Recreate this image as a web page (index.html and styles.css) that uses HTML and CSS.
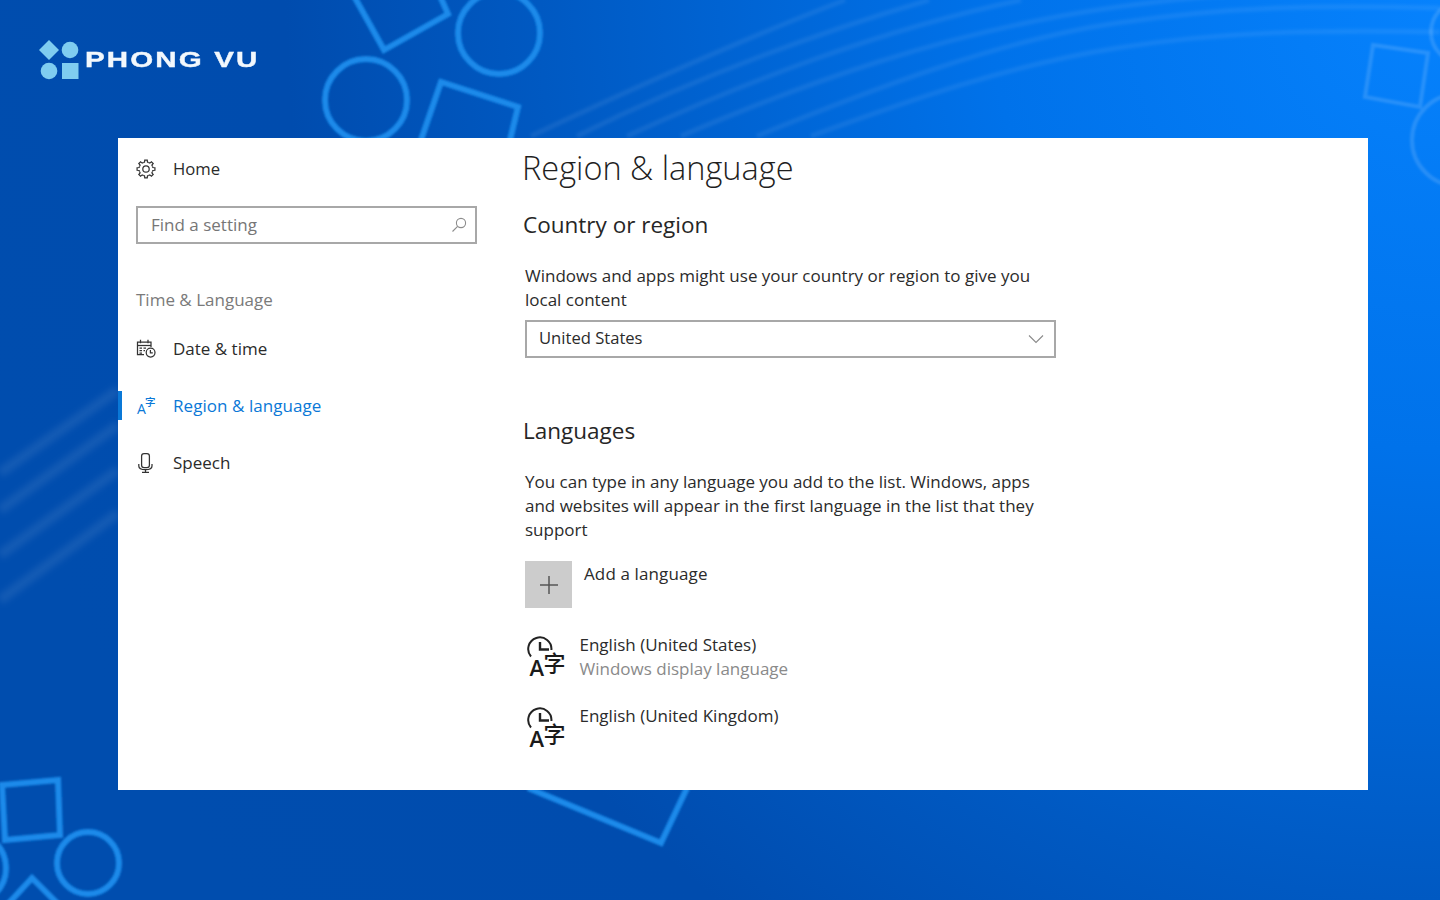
FILE: index.html
```html
<!DOCTYPE html>
<html lang="en">
<head>
<meta charset="utf-8">
<title>Region &amp; language</title>
<link rel="stylesheet" href="styles.css">
</head>
<body>
<svg class="backdrop" viewBox="0 0 1440 900" aria-hidden="true">
  <defs>
    <radialGradient id="bg" gradientUnits="userSpaceOnUse" cx="1440" cy="0" r="1500">
      <stop offset="0" stop-color="#0682fd"/>
      <stop offset=".3" stop-color="#0072ea"/>
      <stop offset=".6" stop-color="#0059c2"/>
      <stop offset=".77" stop-color="#004cae"/>
      <stop offset="1" stop-color="#004dae"/>
    </radialGradient>
    <filter id="soft" x="-20%" y="-20%" width="140%" height="140%"><feGaussianBlur stdDeviation="1.1"/></filter>
    <filter id="softer" x="-20%" y="-50%" width="140%" height="200%"><feGaussianBlur stdDeviation="1.6"/></filter>
    <filter id="band" x="-20%" y="-50%" width="140%" height="200%"><feGaussianBlur stdDeviation="3"/></filter>
  </defs>
  <rect width="1440" height="900" fill="url(#bg)"/>
  <g fill="none" stroke="#fff" stroke-opacity=".08" stroke-width="10" filter="url(#band)">
    <path d="M0 473 L118 390"/><path d="M0 510 L118 425"/><path d="M0 555 L118 470"/><path d="M0 600 L118 513"/>
  </g>
  <g fill="none" stroke="#fff" stroke-opacity=".07" stroke-width="5" filter="url(#softer)">
    <path d="M531 136 C640 85 740 40 845 0"/>
    <path d="M577 136 C690 80 810 35 929 0"/>
    <path d="M627 136 C750 80 880 30 1021 0"/>
    <path d="M681 136 C800 85 950 30 1117 7 S1320 -5 1440 -5"/>
    <path d="M757 136 C870 90 1000 40 1117 23 S1320 5 1440 8"/>
    <path d="M811 136 C910 100 1010 65 1117 48 S1320 30 1440 32"/>
  </g>
  <g fill="none" stroke="#1a8aea" stroke-width="6" filter="url(#soft)">
    <path d="M354 -4 L384 50 L448 14 L440 -4"/>
    <circle cx="499" cy="33" r="41"/>
    <circle cx="366" cy="100" r="41"/>
    <path d="M421 140 L441 82 L518 107 L510 140"/>
    <path d="M2 785 L58 780 L60 835 L5 840 Z"/>
    <ellipse cx="88" cy="863" rx="31" ry="31"/>
    <circle cx="-30" cy="868" r="36"/>
    <path d="M8 904 L32 878 L58 904"/>
    <path d="M528 788 L661 843 L687 788"/>
  </g>
  <g fill="none" stroke="#fff" stroke-opacity=".14" stroke-width="4" filter="url(#soft)">
    <path d="M1373 45 L1428 53 L1420 107 L1365 97 Z"/>
    <circle cx="1462" cy="32" r="31"/>
    <circle cx="1458" cy="140" r="46"/>
  </g>
</svg>

<header class="brand">
  <svg class="brand-mark" viewBox="0 0 40 40" aria-hidden="true">
    <path d="M10 0 L20 10 L10 20 L0 10 Z"/>
    <circle cx="31" cy="10" r="8.3"/>
    <circle cx="10" cy="31" r="8.3"/>
    <rect x="23" y="23" width="16.5" height="16"/>
  </svg>
  <span class="brand-name">PHONG VU</span>
</header>

<main class="window">
  <nav class="sidebar">
    <a class="nav-item home">
      <svg class="nav-icon" viewBox="0 0 20 20" aria-hidden="true">
        <g class="line">
          <g id="tooth"><path d="M7.32 3.53 8.54 3.15 8.75 1.09H11.25L11.46 3.15 12.68 3.53"/></g>
          <use href="#tooth" transform="rotate(45 10 10)"/>
          <use href="#tooth" transform="rotate(90 10 10)"/>
          <use href="#tooth" transform="rotate(135 10 10)"/>
          <use href="#tooth" transform="rotate(180 10 10)"/>
          <use href="#tooth" transform="rotate(225 10 10)"/>
          <use href="#tooth" transform="rotate(270 10 10)"/>
          <use href="#tooth" transform="rotate(315 10 10)"/>
          <circle cx="10" cy="10" r="3.2"/>
        </g>
      </svg>
      <span>Home</span>
    </a>
    <div class="search">
      <span>Find a setting</span>
      <svg class="search-icon" viewBox="0 0 16 16" aria-hidden="true"><circle cx="10" cy="6" r="4.6"/><path d="M6.6 9.4 1.5 14.5"/></svg>
    </div>
    <div class="nav-group">Time &amp; Language</div>
    <a class="nav-item">
      <svg class="nav-icon" viewBox="0 0 20 20" aria-hidden="true">
        <g class="line">
          <path d="M8 15.5H1.5V3H15V8"/><path d="M1.5 6.5H15"/><path d="M4.5 .8V4.2M12 .8V4.2"/>
          <path d="M3.5 9H6M7.5 9H10M3.5 11.5H6M7.5 11.5H9M3.5 14H6"/>
          <circle cx="14.6" cy="13.6" r="4.4"/><path d="M14.4 11V13.9H16.8"/>
        </g>
      </svg>
      <span>Date &amp; time</span>
    </a>
    <a class="nav-item active">
      <svg class="nav-icon tall" viewBox="0 -6 20 32" aria-hidden="true">
        <text class="glyph-a" x="1" y="18">A</text>
        <text class="glyph-zi" x="9" y="9.5">字</text>
      </svg>
      <span>Region &amp; language</span>
    </a>
    <a class="nav-item">
      <svg class="nav-icon" viewBox="0 0 20 20" aria-hidden="true">
        <g class="line">
          <rect x="5.6" y=".7" width="7.8" height="14" rx="2.4"/>
          <path d="M2.8 11V13C2.8 15.5 5 16.7 9.5 16.7S16 15.5 16 13V11"/>
          <path d="M9.5 16.7V19M6 19.3H13"/>
        </g>
      </svg>
      <span>Speech</span>
    </a>
  </nav>

  <section class="content">
    <h1>Region &amp; language</h1>
    <h2 class="country-title">Country or region</h2>
    <p class="copy country-copy">Windows and apps might use your country or region to give you<br>local content</p>
    <div class="select">
      <span>United States</span>
      <svg class="chevron" viewBox="0 0 16 10" aria-hidden="true"><path d="M1 1.5 8 8.5 15 1.5"/></svg>
    </div>
    <h2 class="languages-title">Languages</h2>
    <p class="copy languages-copy">You can type in any language you add to the list. Windows, apps<br>and websites will appear in the first language in the list that they<br>support</p>
    <div class="add-language">
      <div class="add-tile"><svg viewBox="0 0 20 20" aria-hidden="true"><path d="M10 1V19M1 10H19"/></svg></div>
      <span>Add a language</span>
    </div>
    <div class="language first">
      <svg class="language-icon" viewBox="0 0 44 46" aria-hidden="true">
        <path class="clock" d="M6 20.5A11.6 11.6 0 1 1 26.4 14"/>
        <path class="clock-hand" d="M15 6V13.5H24"/>
        <text class="big-a" x="4.5" y="40">A</text>
        <text class="big-zi" x="18.5" y="35">字</text>
      </svg>
      <div class="language-text">
        <div>English (United States)</div>
        <div class="muted">Windows display language</div>
      </div>
    </div>
    <div class="language second">
      <svg class="language-icon" viewBox="0 0 44 46" aria-hidden="true">
        <path class="clock" d="M6 20.5A11.6 11.6 0 1 1 26.4 14"/>
        <path class="clock-hand" d="M15 6V13.5H24"/>
        <text class="big-a" x="4.5" y="40">A</text>
        <text class="big-zi" x="18.5" y="35">字</text>
      </svg>
      <div class="language-text">
        <div>English (United Kingdom)</div>
      </div>
    </div>
  </section>
</main>
</body>
</html>
```

FILE: styles.css
```css
* { box-sizing: border-box; }
html, body { margin: 0; height: 100%; }
body {
  position: relative;
  width: 1440px;
  height: 900px;
  overflow: hidden;
  font-family: "Open Sans", "Noto Sans CJK SC", sans-serif;
  font-size: 17px;
  line-height: 24px;
  color: #2b2b2b;
  background: #0052b9;
  padding: 40px 72px 0 118px;
}
.backdrop { position: absolute; inset: 0; width: 1440px; height: 900px; }

.brand {
  position: relative;
  display: flex;
  align-items: center;
  gap: 6px;
  height: 40px;
  margin-left: -79px;
}
.brand-mark { width: 40px; height: 40px; flex: none; fill: #7fcdf0; }
.brand-name {
  font-family: "Liberation Sans", sans-serif;
  font-weight: 700;
  font-size: 22px;
  line-height: 22px;
  letter-spacing: 1.6px;
  color: #f2f8fd;
  -webkit-text-stroke: .4px #f2f8fd;
  transform: scaleX(1.34);
  transform-origin: left center;
}

.window {
  position: relative;
  display: flex;
  height: 652px;
  margin-top: 58px;
  background: #fff;
}

.sidebar { width: 405px; flex: none; padding: 0 0 0 18px; }
.nav-item {
  position: relative;
  display: flex;
  align-items: center;
  height: 57px;
  gap: 17px;
  color: #2b2b2b;
}
.nav-item.home { height: 62px; font-size: 16.7px; }
.nav-item.active { color: #0a78d7; letter-spacing: .05px; }
.nav-item.active::before {
  content: "";
  position: absolute;
  left: -18px;
  top: 14px;
  width: 4px;
  height: 29px;
  background: #0a78d7;
}
.nav-icon { width: 20px; height: 20px; flex: none; }
.nav-icon.tall { height: 32px; }
.line { fill: none; stroke: #333; stroke-width: 1.25; }
.glyph-a { font: 400 14px "Open Sans", sans-serif; fill: #0a78d7; }
.glyph-zi { font: 500 10.5px "Noto Sans CJK SC", sans-serif; fill: #0a78d7; }

.search {
  display: flex;
  align-items: center;
  justify-content: space-between;
  width: 341px;
  height: 38px;
  margin-top: 6px;
  padding: 0 8px 0 13px;
  border: 2px solid #a8a8a8;
  color: #767676;
}
.search-icon { width: 16px; height: 16px; fill: none; stroke: #8c8c8c; stroke-width: 1.1; }
.nav-group {
  margin-top: 44px;
  color: #7a7a7a;
}
.nav-group + .nav-item { margin-top: 8px; }

.content { flex: 1; padding: 10px 0 0 0; }
h1 {
  margin: 0 0 0 -1px;
  font-size: 32.5px;
  line-height: 40px;
  font-weight: 300;
  color: #1f1f1f;
}
h2 {
  margin: 0;
  font-size: 22.5px;
  line-height: 30px;
  font-weight: 400;
  color: #262626;
}
.country-title { margin: 22px 0 0 0; }
.copy { margin: 0 0 0 2px; }
.country-copy { margin-top: 24px; }
.select {
  display: flex;
  align-items: center;
  justify-content: space-between;
  width: 531px;
  height: 38px;
  margin: 8px 0 0 2px;
  padding: 0 10px 2px 12px;
  border: 2px solid #a8a8a8;
  font-size: 16.6px;
}
.chevron { width: 16px; height: 10px; margin-top: 2px; fill: none; stroke: #8a8a8a; stroke-width: 1.1; }
.languages-title { margin-top: 58px; }
.languages-copy { margin-top: 24px; }
.add-language { display: flex; gap: 12px; margin: 19px 0 0 2px; letter-spacing: .12px; }
.add-tile { width: 47px; height: 47px; background: #cccccc; padding: 13.5px; }
.add-tile svg { display: block; width: 20px; height: 20px; fill: none; stroke: #555; stroke-width: 1.5; }
.add-language span { margin-top: 1px; }
.language { display: flex; gap: 10.5px; margin-left: 2px; height: 48px; }
.language.first { margin-top: 25px; }
.language.second { margin-top: 23px; }
.language-icon { width: 44px; height: 46px; flex: none; margin-top: 3px; }
.clock { fill: none; stroke: #222; stroke-width: 2; }
.clock-hand { fill: none; stroke: #222; stroke-width: 2.4; }
.big-a { font: 600 22px "Open Sans", sans-serif; fill: #1a1a1a; }
.big-zi { font: 500 22px "Noto Sans CJK SC", sans-serif; fill: #1a1a1a; }
.muted { color: #8a8a8a; }
```
